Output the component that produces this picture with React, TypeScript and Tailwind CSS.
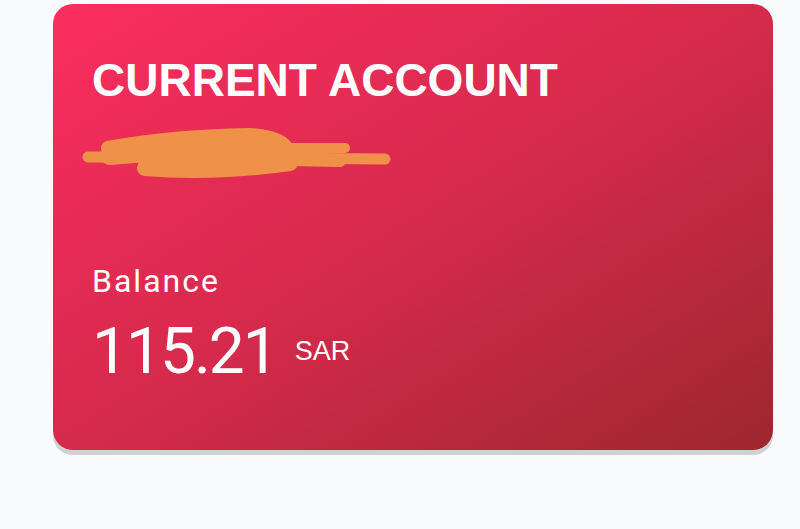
import React from "react";

export default function App() {
  return (
    <div className="w-[800px] h-[529px] bg-[#f9fafc] pt-[4px] pl-[53px]" style={{ fontFamily: "'Liberation Sans', Arial, sans-serif" }}>
      <div className="w-[720px] h-[446px] rounded-[20px] bg-gradient-to-br from-[#fb2d5f] via-[#d62a4c] to-[#9e262f] shadow-[0_5px_0_0_#cfd1d4] text-white pl-[39px] pt-[53px]">
        <div className="text-[46px] leading-[46px] font-bold">CURRENT ACCOUNT</div>
        <div className="relative h-[163px]">
          <svg className="absolute left-[-17px] top-[17px]" width="330" height="70" viewBox="75 120 330 70">
            <g stroke="#f0914a" strokeLinecap="round" strokeLinejoin="round" fill="none">
              <path d="M88 157 L385 159" strokeWidth="11" />
              <path d="M108 148 C150 140, 200 136, 250 135 C268 136, 280 140, 285 146" strokeWidth="14" />
              <path d="M110 155 C160 150, 220 148, 280 150" strokeWidth="20" />
              <path d="M145 168 C190 172, 240 170, 290 163" strokeWidth="16" />
              <path d="M290 148 L345 148" strokeWidth="10" />
              <path d="M290 160 L340 161" strokeWidth="12" />
            </g>
          </svg>
        </div>
        <div className="text-[32px] leading-[31px] tracking-[2px]" style={{ fontFamily: "Roboto, 'Liberation Sans', sans-serif" }}>Balance</div>
        <div className="mt-[23px] flex items-start">
          <span className="text-[64px] leading-[64px] tracking-[-2px]" style={{ fontFamily: "Roboto, 'Liberation Sans', sans-serif" }}>115.21</span>
          <span className="ml-[18px] mt-[18px] text-[27px] leading-[27px]">SAR</span>
        </div>
      </div>
    </div>
  );
}
